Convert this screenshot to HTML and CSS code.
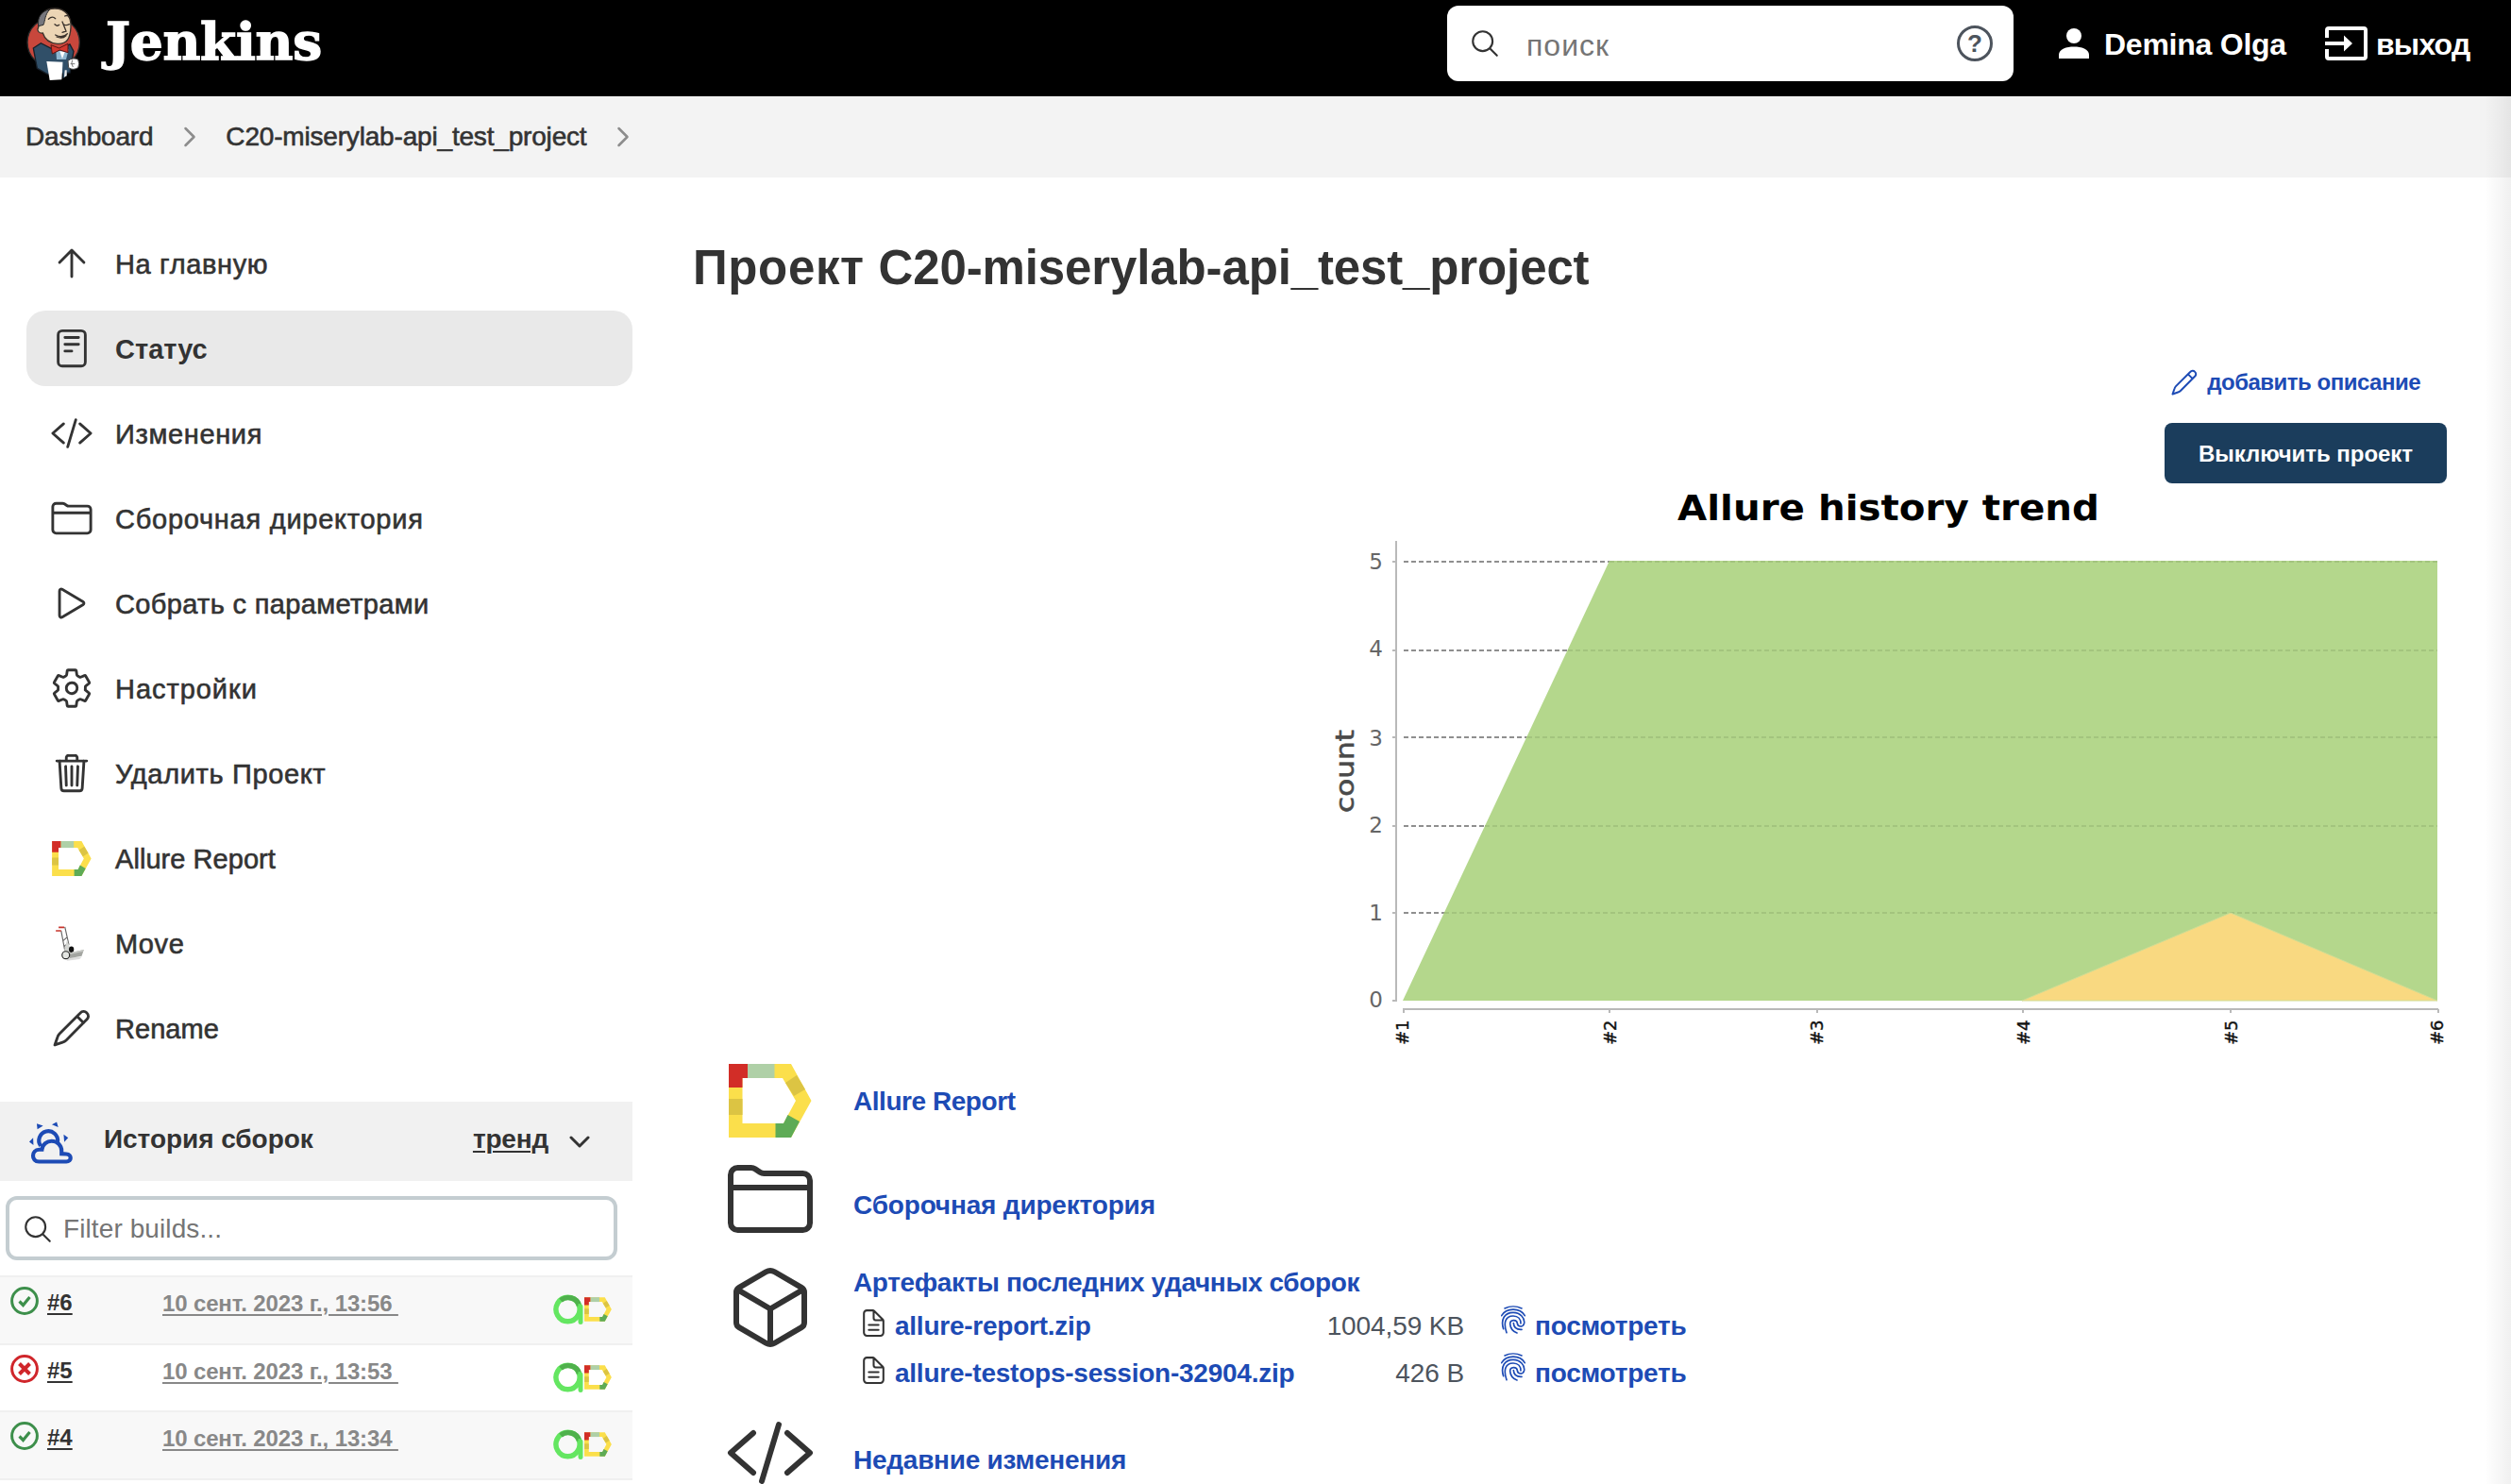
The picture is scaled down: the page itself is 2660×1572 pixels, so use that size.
FILE: index.html
```html
<!DOCTYPE html>
<html lang="ru">
<head>
<meta charset="utf-8">
<title>C20-miserylab-api_test_project [Jenkins]</title>
<link rel="stylesheet" href="styles.css">
</head>
<body>
<svg class="sprite" width="0" height="0" aria-hidden="true">
  <symbol id="i-search" viewBox="0 0 512 512"><path d="M221.09 64a157.09 157.09 0 10157.09 157.09A157.1 157.1 0 00221.09 64zM338.29 338.29L448 448"/></symbol>
  <symbol id="i-chev" viewBox="0 0 512 512"><path d="M184 112l144 144-144 144"/></symbol>
  <symbol id="i-up" viewBox="0 0 512 512"><path d="M112 244l144-144 144 144M256 120v292"/></symbol>
  <symbol id="i-reader" viewBox="0 0 512 512"><rect x="96" y="48" width="320" height="416" rx="48"/><path d="M176 128h160M176 208h160M176 288h80"/></symbol>
  <symbol id="i-code" viewBox="0 0 512 512"><path d="M160 368L32 256l128-112M352 368l128-112-128-112M304 96l-96 320"/></symbol>
  <symbol id="i-folder" viewBox="0 0 512 512"><path d="M440 432H72a40 40 0 01-40-40V120a40 40 0 0140-40h75.89a40 40 0 0122.19 6.72l27.84 18.56a40 40 0 0022.19 6.72H440a40 40 0 0140 40v240a40 40 0 01-40 40zM32 192h448"/></symbol>
  <symbol id="i-play" viewBox="0 0 512 512"><path d="M112 111v290c0 17.44 17 28.52 31 20.16l247.9-148.37c12.12-7.25 12.12-26.33 0-33.58L143 90.84c-14-8.36-31 2.72-31 20.16z"/></symbol>
  <symbol id="i-gear" viewBox="0 0 512 512"><path d="M262.29 192.31a64 64 0 1057.4 57.4 64.13 64.13 0 00-57.4-57.4zM416.39 256a154.34 154.34 0 01-1.53 20.79l45.21 35.46a10.81 10.81 0 012.45 13.75l-42.77 74a10.81 10.81 0 01-13.14 4.59l-44.9-18.08a16.11 16.11 0 00-15.17 1.75A164.48 164.48 0 01325 400.8a15.94 15.94 0 00-8.82 12.14l-6.73 47.89a11.08 11.08 0 01-10.68 9.17h-85.54a11.11 11.11 0 01-10.69-8.87l-6.72-47.82a16.07 16.07 0 00-9-12.22 155.3 155.3 0 01-21.46-12.57 16 16 0 00-15.11-1.71l-44.89 18.07a10.81 10.81 0 01-13.14-4.58l-42.77-74a10.8 10.8 0 012.45-13.75l38.21-30a16.05 16.05 0 006-14.08c-.36-4.17-.58-8.33-.58-12.5s.21-8.27.58-12.35a16 16 0 00-6.07-13.94l-38.19-30A10.81 10.81 0 0149.48 186l42.77-74a10.81 10.81 0 0113.14-4.59l44.9 18.08a16.11 16.11 0 0015.17-1.75A164.48 164.48 0 01187 111.2a15.94 15.94 0 008.82-12.14l6.73-47.89A11.08 11.08 0 01213.23 42h85.54a11.11 11.11 0 0110.69 8.87l6.72 47.82a16.07 16.07 0 009 12.22 155.3 155.3 0 0121.46 12.57 16 16 0 0015.11 1.71l44.89-18.07a10.81 10.81 0 0113.14 4.58l42.77 74a10.8 10.8 0 01-2.45 13.75l-38.21 30a16.05 16.05 0 00-6.05 14.08c.33 4.14.55 8.3.55 12.47z"/></symbol>
  <symbol id="i-trash" viewBox="0 0 512 512"><path d="M112 112l20 320c.95 18.49 14.4 32 32 32h184c17.67 0 30.87-13.51 32-32l20-320M80 112h352M192 112V72a23.93 23.93 0 0124-24h80a23.93 23.93 0 0124 24v40M256 176v224M184 176l8 224M328 176l-8 224"/></symbol>
  <symbol id="i-pencil" viewBox="0 0 512 512"><path d="M355 80L112 322C98 336 92 350 88 364L56 456L148 424C162 420 176 414 190 400L432 157C456 134 460 102 434 78C410 52 378 56 355 80zM318 118L395 194"/></symbol>
  <symbol id="i-cube" viewBox="0 0 512 512"><path d="M448 341.37V170.61A32 32 0 00432.11 143l-152-88.46a47.94 47.94 0 00-48.24 0L79.89 143A32 32 0 0064 170.61v170.76A32 32 0 0079.89 369l152 88.46a48 48 0 0048.24 0l152-88.46A32 32 0 00448 341.37zM69 153.99l187 110 187-110M256 463.99v-200"/></symbol>
  <symbol id="i-doc" viewBox="0 0 512 512"><path d="M416 221.25V416a48 48 0 01-48 48H144a48 48 0 01-48-48V96a48 48 0 0148-48h98.75a32 32 0 0122.62 9.37l141.26 141.26a32 32 0 019.37 22.62zM256 56v120a32 32 0 0032 32h120M176 288h160M176 368h160"/></symbol>
  <symbol id="i-finger" viewBox="0 0 78 90"><path d="M12 9C28 1 50 1 66 9M2 32C17 6 61 6 76 32M8 74C-2 44 12 22 39 22C62 22 76 40 74 56C71 70 53 69 52 56C50 43 29 44 29 58C30 72 38 82 51 87M18 86C8 58 12 33 39 33C55 33 63 44 63 57M40 56C41 70 50 77 66 76"/></symbol>
  <symbol id="i-allure" viewBox="0 0 88 78">
    <path fill="#fbdf4b" fill-rule="evenodd" d="M0 0H66L87.5 39L66 78H0zM14.5 15V63H58L71 39L57 15z"/>
    <path fill="#d22d27" d="M0 0H20V15H14.5V25H0z"/><path fill="#afd0a7" d="M20 0H48.5V15H20z"/>
    <path fill="#dcc443" d="M0 37H14.5V54H0zM72 12L60 20L69 34L81 27z"/><path fill="#5eab56" d="M49.5 63H58L62.5 54L75 61L66 78H49.5z"/>
  </symbol>
  <symbol id="i-testops" viewBox="0 0 32 32"><path fill="none" stroke="#64e661" stroke-width="5.4" d="M15.500 3.200a12.500 12.800 0 1 0 .01 0z"/><path fill="none" stroke="#4fb14c" stroke-width="5.4" d="M8 6.500C14 1.500 25 3 27.500 12"/><path fill="#64e661" d="M26.500 10q5 0 5 3v17q0 2-2.500 2t-2.500-3z"/></symbol>
  <symbol id="i-ok" viewBox="0 0 30 30"><circle cx="15" cy="15" r="13.400" stroke="#3d8f4b" stroke-width="3"/><path stroke="#3d8f4b" stroke-width="3.200" d="M9.500 15.500l4 4 7-8.500"/></symbol>
  <symbol id="i-fail" viewBox="0 0 30 30"><circle cx="15" cy="15" r="13.400" stroke="#d0262b" stroke-width="3"/><path stroke="#d0262b" stroke-width="4" d="M9.500 9.500l11 11M20.500 9.500l-11 11"/></symbol>
</svg>

<header class="top">
  <a class="brand">
    <svg class="mascot" viewBox="0 0 300 270">
      <ellipse cx="140" cy="132" rx="83" ry="80" fill="#c8473c" stroke="#2b2b2b" stroke-width="4"/>
      <path d="M76 150L100 134L150 160L192 138L204 160L192 228L120 232L88 214z" fill="#304f68" stroke="#17202a" stroke-width="4"/>
      <path d="M148 160L188 154L180 186H150z" fill="#8fb6cf"/>
      <path d="M160 160L176 162L168 184z" fill="#fff"/>
      <path d="M92 84C90 46 112 24 144 24C178 24 197 48 195 84C193 118 184 138 152 136C124 134 112 122 106 102C92 104 86 92 92 84z" fill="#ecd5b5" stroke="#3a322c" stroke-width="4"/>
      <path d="M92 80C88 52 102 32 128 27C112 44 114 62 108 76z" fill="#77777d" stroke="#2b2b2b" stroke-width="3"/>
      <path d="M124 58q12-12 22-2M176 48q10-4 14 4M144 74q8 8 14 2M172 74q8 6 18 0M168 66l12 30-12 4M146 108q22 12 38-4M150 114q18 8 30-4" fill="none" stroke="#3a322c" stroke-width="4" stroke-linecap="round"/>
      <path d="M132 140L158 150L186 136L186 164L160 156L136 168z" fill="#d2382f" stroke="#5a1512" stroke-width="3"/>
      <path d="M118 192L170 194L166 250L128 252z" fill="#fff"/>
      <path d="M170 194h14l-2 44-12 8z" fill="#304f68"/><path d="M176 220l6 0 0 18-8 4z" fill="#eee"/>
      <path d="M186 190q16-12 32-4q6 14 0 26q-16 10-30 0z" fill="#fff" stroke="#444" stroke-width="3"/><path d="M200 188q-6 10 2 22M194 200h14" stroke="#777" stroke-width="3" fill="none"/>
    </svg>
    <span class="brand-name">Jenkins</span>
  </a>
  <div class="search">
    <svg class="icon search-icon"><use href="#i-search"/></svg>
    <span class="search-hint">поиск</span>
    <span class="help">?</span>
  </div>
  <a class="user">
    <svg class="user-icon" viewBox="0 0 32 32"><circle cx="16" cy="8" r="8" fill="#fff"/><path fill="#fff" d="M0 32V28C0 22 8 19.500 16 19.500S32 22 32 28V32z"/></svg>
    <span class="user-name">Demina Olga</span>
  </a>
  <a class="logout">
    <svg class="logout-icon" viewBox="0 0 45 36"><path fill="none" stroke="#fff" stroke-width="4" d="M2 12V4Q2 2 4 2H41Q43 2 43 4V32Q43 34 41 34H4Q2 34 2 32V24"/><path fill="#fff" d="M0 16H20V9.500L29 18L20 26.500V20H0z"/></svg>
    <span class="logout-name">выход</span>
  </a>
</header>

<nav class="crumbs">
  <span>Dashboard</span>
  <svg class="icon crumb-sep"><use href="#i-chev"/></svg>
  <span>C20-miserylab-api_test_project</span>
  <svg class="icon crumb-sep"><use href="#i-chev"/></svg>
</nav>

<div class="page">
  <aside class="side">
    <div class="menu">
      <a class="item"><svg class="icon"><use href="#i-up"/></svg><span>На главную</span></a>
      <a class="item active"><svg class="icon"><use href="#i-reader"/></svg><span>Статус</span></a>
      <a class="item"><svg class="icon"><use href="#i-code"/></svg><span>Изменения</span></a>
      <a class="item wide"><svg class="icon"><use href="#i-folder"/></svg><span>Сборочная директория</span></a>
      <a class="item narrow"><svg class="icon"><use href="#i-play"/></svg><span>Собрать с параметрами</span></a>
      <a class="item wider"><svg class="icon"><use href="#i-gear"/></svg><span>Настройки</span></a>
      <a class="item"><svg class="icon"><use href="#i-trash"/></svg><span>Удалить Проект</span></a>
      <a class="item latin"><svg class="allure-s"><use href="#i-allure"/></svg><span>Allure Report</span></a>
      <a class="item"><svg class="cart" viewBox="0 0 90 112"><path d="M32 102L84 98L76 106L36 111z" fill="#ddd"/><path d="M29 3L42 60M17 15L30 84M22 48l14-12M26 66l14-12" stroke="#666" stroke-width="3.500" fill="none"/><path d="M36 44L45 68L46 86L26 82z" fill="#d3d5d2"/><ellipse cx="50" cy="75" rx="8" ry="10" fill="#111"/><path d="M43 86L90 76L83 96L45 103z" fill="#a3a5a1"/><path d="M43 86L90 76L86 82L48 90z" fill="#c9cbc7"/><path d="M9 4h18M0 15h17" stroke="#c8342c" stroke-width="5"/><circle cx="32" cy="93" r="12" fill="#e4e6e3" stroke="#2b2b2b" stroke-width="3.500"/></svg><span>Move</span></a>
      <a class="item latin"><svg class="icon"><use href="#i-pencil"/></svg><span>Rename</span></a>
    </div>

    <section class="builds">
      <div class="builds-head">
        <svg class="weather" viewBox="88 80 150 142"><path fill="none" stroke="#1d4bb5" stroke-width="13" d="M129 160A31 31 0 1 1 185 146M123 212C97 212 97 173 124 172L133 172C135 154 150 144 165 144C184 144 198 158 198 176V186L214 187C233 188 232 212 214 212z"/><path fill="#1d4bb5" d="M116 86L137 93L118 105zM166 89L182 81L187 98zM205 122L220 133L207 147zM91 146L104 133L105 157z"/></svg>
        <span class="builds-title">История сборок</span>
        <a class="trend">тренд</a>
        <svg class="icon trend-chev" viewBox="0 0 24 14"><path d="M3 3l9 9 9-9"/></svg>
      </div>
      <div class="filter">
        <svg class="icon search-icon"><use href="#i-search"/></svg>
        <span>Filter builds...</span>
      </div>
      <div class="build odd"><svg class="status"><use href="#i-ok"/></svg><a class="num">#6</a><a class="date">10 сент. 2023 г., 13:56&nbsp;</a><svg class="testops"><use href="#i-testops"/></svg><svg class="allure-xs"><use href="#i-allure"/></svg></div>
      <div class="build"><svg class="status"><use href="#i-fail"/></svg><a class="num">#5</a><a class="date">10 сент. 2023 г., 13:53&nbsp;</a><svg class="testops"><use href="#i-testops"/></svg><svg class="allure-xs"><use href="#i-allure"/></svg></div>
      <div class="build odd"><svg class="status"><use href="#i-ok"/></svg><a class="num">#4</a><a class="date">10 сент. 2023 г., 13:34&nbsp;</a><svg class="testops"><use href="#i-testops"/></svg><svg class="allure-xs"><use href="#i-allure"/></svg></div>
      <div class="build"></div>
    </section>
  </aside>

  <main class="main">
    <h1><span class="kind">Проект </span>C20-miserylab-api_test_project</h1>
    <div class="actions">
      <a class="describe"><svg class="icon"><use href="#i-pencil"/></svg>добавить описание</a>
      <button class="disable">Выключить проект</button>
    </div>
    <svg class="chart" viewBox="1400 512 1192 600">
      <text class="c-title" x="1777" y="551" textLength="447" lengthAdjust="spacingAndGlyphs">Allure history trend</text>
      <path class="grid" d="M1487 595H1705M1487 689H1661M1487 781H1618M1487 875H1573M1487 967H1530"/>
      <path fill="#b4d78c" d="M1486 1060L1705 594H2582V1060z"/>
      <path class="grid faint" d="M1705 595H2582M1661 689H2582M1618 781H2582M1573 875H2582M1530 967H2582"/>
      <path fill="#f9d981" stroke="#cfdc94" stroke-width="1" d="M2142 1060L2363 967L2582 1060z"/>
      <path class="axis" d="M1479 573V1060M1475 595H1479M1475 689H1479M1475 781H1479M1475 875H1479M1475 967H1479M1475 1060H1480M1486 1069H2583M1487 1069V1073M1705 1069V1073M1925 1069V1073M2143 1069V1073M2363 1069V1073M2583 1069V1073"/>
      <g class="c-y"><text x="1465" y="603">5</text><text x="1465" y="695">4</text><text x="1465" y="790">3</text><text x="1465" y="882">2</text><text x="1465" y="975">1</text><text x="1465" y="1067">0</text></g>
      <g class="c-x"><text transform="translate(1492 1107) rotate(-90)">#1</text><text transform="translate(1712 1107) rotate(-90)">#2</text><text transform="translate(1931 1107) rotate(-90)">#3</text><text transform="translate(2150 1107) rotate(-90)">#4</text><text transform="translate(2370 1107) rotate(-90)">#5</text><text transform="translate(2588 1107) rotate(-90)">#6</text></g>
      <text class="c-label" transform="translate(1434 861) rotate(-90)" textLength="88" lengthAdjust="spacingAndGlyphs">count</text>
    </svg>

    <div class="links">
      <svg class="allure-l"><use href="#i-allure"/></svg>
      <a class="l1">Allure Report</a>
      <svg class="icon big b2"><use href="#i-folder"/></svg>
      <a class="l2">Сборочная директория</a>
      <svg class="icon big b3"><use href="#i-cube"/></svg>
      <div class="artifacts">
        <a class="l3">Артефакты последних удачных сборок</a>
        <div class="file"><svg class="icon doc"><use href="#i-doc"/></svg><a class="name">allure-report.zip</a><span class="size">1004,59 KB</span><svg class="finger"><use href="#i-finger"/></svg><a>посмотреть</a></div>
        <div class="file"><svg class="icon doc"><use href="#i-doc"/></svg><a class="name">allure-testops-session-32904.zip</a><span class="size">426 B</span><svg class="finger"><use href="#i-finger"/></svg><a>посмотреть</a></div>
      </div>
      <svg class="icon big b4"><use href="#i-code"/></svg>
      <a class="l4">Недавние изменения</a>
    </div>
  </main>
</div>
<div class="edge"></div>
</body>
</html>
```
FILE: styles.css
```css
* { box-sizing: border-box; }
body {
  margin: 0;
  width: 2660px;
  height: 1572px;
  overflow: hidden;
  position: relative;
  background: #fff;
  color: #333;
  font: 28px/32px "Liberation Sans", Arial, sans-serif;
}
svg { display: block; flex: none; }
.sprite { position: absolute; }
span, a { white-space: nowrap; }
.icon {
  width: 46px;
  height: 46px;
  fill: none;
  stroke: #333;
  stroke-width: 32;
  stroke-linecap: round;
  stroke-linejoin: round;
}

/* header */
.top {
  display: flex;
  align-items: center;
  height: 102px;
  padding: 0 43px 10px 10px;
  background: #000;
  color: #fff;
  font-size: 32px;
  font-weight: bold;
}
.brand { display: flex; align-items: center; margin-right: auto; }
.mascot { width: 100px; height: 90px; }
.brand-name {
  margin: -5px 0 0 2px;
  font: bold 55px/80px "DejaVu Serif", serif;
  letter-spacing: -.3px;
  -webkit-text-stroke: 1.4px #fff;
}
.search {
  display: flex;
  align-items: center;
  width: 600px;
  height: 80px;
  margin-right: 48px;
  padding: 0 22px 0 23px;
  border-radius: 12px;
  background: #fff;
  font-weight: normal;
  color: #757575;
}
.search-icon { width: 34px; height: 34px; }
.search-hint { margin: 4px auto 0 27px; letter-spacing: 1px; }
.help {
  width: 38px;
  height: 38px;
  border: 3px solid #4d545d;
  border-radius: 50%;
  color: #4d545d;
  font-size: 26px;
  line-height: 32px;
  font-weight: bold;
  text-align: center;
}
.user { display: flex; align-items: center; width: 282px; }
.user-icon { width: 32px; height: 32px; margin-right: 16px; }
.user-name { letter-spacing: -.25px; margin-top: 2px; }
.logout { display: flex; align-items: center; width: 154px; }
.logout-icon { width: 45px; height: 36px; margin-right: 9px; }
.logout-name { letter-spacing: -.8px; margin-top: 2px; }

/* breadcrumbs */
.crumbs {
  display: flex;
  align-items: center;
  height: 86px;
  padding: 0 27px;
  background: #f3f3f3;
  letter-spacing: -.18px;
  -webkit-text-stroke: .6px #333;
}
.crumb-sep { width: 32px; height: 32px; margin: 0 22px 0 23px; stroke: #8c8c8c; stroke-width: 40; }

.page { display: grid; grid-template-columns: 670px 1fr; }

/* side menu */
.menu { display: flex; flex-direction: column; gap: 10px; padding: 51px 0 38px 28px; font-size: 29px; letter-spacing: .64px; }
.item { display: flex; align-items: center; height: 80px; padding-left: 25px; border-radius: 20px; -webkit-text-stroke: .6px #333; }
.item span { margin: 1px 0 0 23px; }
.item.active { background: #e9e9e9; font-weight: bold; letter-spacing: 0; -webkit-text-stroke: 0; }
.item.narrow { letter-spacing: .35px; }
.item.wide { letter-spacing: .74px; }
.item.wider { letter-spacing: .96px; }
.item.latin { letter-spacing: .05px; }
.allure-s { width: 42px; height: 37px; margin: 0 2px; }
.cart { width: 30px; height: 37px; margin: 0 10px 0 6px; }

/* build history */
.builds-head { display: flex; align-items: center; height: 84px; padding: 0 44px 5px 30px; background: #f1f1f1; font-weight: bold; }
.weather { width: 48px; height: 46px; margin-top: 8px; }
.builds-title { margin: 0 auto 0 32px; letter-spacing: -.05px; }
.trend { letter-spacing: -.2px; text-decoration: underline; text-decoration-thickness: 2px; text-underline-offset: 3px; }
.trend-chev { width: 24px; height: 14px; margin-left: 21px; stroke-width: 3; margin-top: 5px; }
.filter {
  display: flex;
  align-items: center;
  gap: 10px;
  width: 648px;
  height: 68px;
  margin: 16px 0 16px 6px;
  padding: 1px 0 0 13px;
  border: 4px solid #c4cdd1;
  border-radius: 12px;
  color: #757575;
  letter-spacing: .1px;
}
.build {
  display: flex;
  height: 71.700px;
  padding: 10px 0 0 11px;
  border-top: 2px solid #f0f0f0;
  font-size: 24px;
  line-height: 28px;
  font-weight: bold;
}
.build.odd { background: #f8f8f8; }
.build a { text-decoration: underline; text-decoration-thickness: 2px; text-underline-offset: 3px; }
.status { width: 30px; height: 30px; fill: none; }
.num { width: 122px; padding: 3px 0 0 9px; }
.date { width: 423px; padding: 4px 0 0 9px; color: #888; letter-spacing: -.14px; }
.testops { width: 32px; height: 32px; margin-top: 8px; }
.allure-xs { width: 29px; height: 26px; margin: 11px 0 0 1px; }

/* main column */
.main { padding: 66px 68px 0 64px; }
h1 { margin: 0; font-size: 51px; line-height: 60px; letter-spacing: -.13px; white-space: nowrap; }
.kind { letter-spacing: .65px; }
.actions { display: flex; flex-direction: column; align-items: flex-end; height: 198px; padding-top: 74px; font-weight: bold; }
.describe { display: flex; align-items: center; height: 34px; margin-right: 28px; font-size: 24px; letter-spacing: -.5px; color: #1d4bb5; }
.describe .icon { width: 32px; height: 32px; stroke: #1d4bb5; margin-right: 8px; }
.disable {
  width: 299px;
  height: 64px;
  margin-top: 26px;
  padding: 1px 0 0;
  border: 0;
  border-radius: 8px;
  background: #1b3d5c;
  color: #fff;
  font: bold 24px/63px "Liberation Sans", Arial, sans-serif;
  letter-spacing: -.05px;
}
.chart { width: 1192px; height: 600px; margin-left: auto; font-family: "DejaVu Sans", sans-serif; }
.c-title { font-size: 38px; font-weight: bold; fill: #000; }
.grid { stroke: #8f8f8f; stroke-width: 2; stroke-dasharray: 5 3; fill: none; }
.grid.faint { stroke: #a3c47e; }
.axis { stroke: #b9b9b9; stroke-width: 2; fill: none; }
.c-y { font-size: 23px; fill: #666; text-anchor: end; }
.c-x { font-size: 18px; fill: #111; stroke: #111; stroke-width: .4; }
.c-label { font-size: 27px; fill: #4a4a4a; stroke: #4a4a4a; stroke-width: .6; }

.links { display: grid; grid-template-columns: 136px 1fr; margin-left: 34px; align-items: start; font-weight: bold; color: #1d4bb5; }
.links .big { width: 96px; height: 96px; }
.allure-l { width: 88px; height: 78px; margin: 15px 0 17px 4px; }
.l1 { margin-top: 39px; letter-spacing: -.45px; }
.l2 { margin-top: 39px; letter-spacing: -.18px; }
.l3 { letter-spacing: -.38px; }
.b3 { margin-top: 19px; }
.artifacts { display: flex; flex-direction: column; margin-top: 25px; }
.file { display: flex; align-items: flex-start; height: 32px; margin-top: 14px; letter-spacing: -.24px; }
.file + .file { margin-top: 18px; }
.doc { width: 33px; height: 33px; margin: -4px 6px 0 5px; }
.name { width: 425px; }
.size { width: 178px; text-align: right; font-weight: normal; letter-spacing: -.1px; color: #4d545d; }
.finger { width: 26px; height: 30px; margin: -6px 10px 0 39px; fill: none; stroke: #1d4bb5; stroke-width: 5; stroke-linecap: round; }
.b4 { margin-top: 20px; }
.l4 { margin-top: 60px; letter-spacing: -.25px; }

.edge {
  position: absolute;
  top: 102px;
  right: 0;
  width: 28px;
  height: 1470px;
  background: linear-gradient(to right, rgba(0, 0, 0, 0), rgba(0, 0, 0, .06));
}
```
